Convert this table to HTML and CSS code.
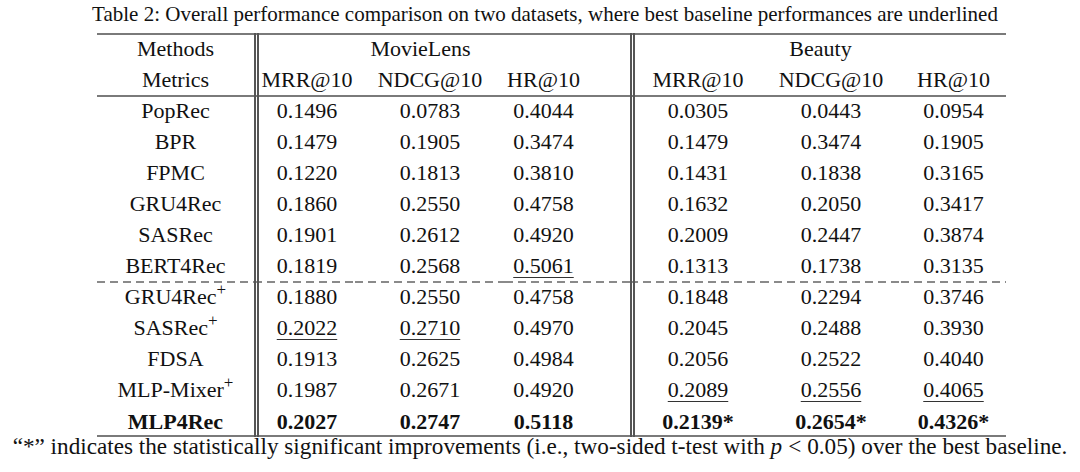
FILE: index.html
```html
<!DOCTYPE html>
<html lang="en">
<head>
<meta charset="utf-8">
<title>Table 2</title>
<link rel="stylesheet" href="styles.css">
</head>
<body>
<div class="page">
  <p class="caption">Table 2: Overall performance comparison on two datasets, where best baseline performances are underlined</p>
  <table class="results">
    <colgroup>
      <col class="c-method">
      <col class="c-ml1">
      <col class="c-ml2">
      <col class="c-ml3">
      <col class="c-b1">
      <col class="c-b2">
      <col class="c-b3">
    </colgroup>
    <thead>
      <tr class="top">
        <th>Methods</th>
        <th colspan="3" class="dl grp-ml">MovieLens</th>
        <th colspan="3" class="dl">Beauty</th>
      </tr>
      <tr>
        <th>Metrics</th>
        <th class="dl">MRR@10</th>
        <th>NDCG@10</th>
        <th class="pad">HR@10</th>
        <th class="dl">MRR@10</th>
        <th>NDCG@10</th>
        <th>HR@10</th>
      </tr>
    </thead>
    <tbody>
      <tr class="first">
        <td>PopRec</td><td class="dl">0.1496</td><td>0.0783</td><td class="pad">0.4044</td><td class="dl">0.0305</td><td>0.0443</td><td>0.0954</td>
      </tr>
      <tr>
        <td>BPR</td><td class="dl">0.1479</td><td>0.1905</td><td class="pad">0.3474</td><td class="dl">0.1479</td><td>0.3474</td><td>0.1905</td>
      </tr>
      <tr>
        <td>FPMC</td><td class="dl">0.1220</td><td>0.1813</td><td class="pad">0.3810</td><td class="dl">0.1431</td><td>0.1838</td><td>0.3165</td>
      </tr>
      <tr>
        <td>GRU4Rec</td><td class="dl">0.1860</td><td>0.2550</td><td class="pad">0.4758</td><td class="dl">0.1632</td><td>0.2050</td><td>0.3417</td>
      </tr>
      <tr>
        <td>SASRec</td><td class="dl">0.1901</td><td>0.2612</td><td class="pad">0.4920</td><td class="dl">0.2009</td><td>0.2447</td><td>0.3874</td>
      </tr>
      <tr>
        <td>BERT4Rec</td><td class="dl">0.1819</td><td>0.2568</td><td class="pad"><span class="ul">0.5061</span></td><td class="dl">0.1313</td><td>0.1738</td><td>0.3135</td>
      </tr>
      <tr class="dashed">
        <td>GRU4Rec<sup>+</sup></td><td class="dl">0.1880</td><td>0.2550</td><td class="pad">0.4758</td><td class="dl">0.1848</td><td>0.2294</td><td>0.3746</td>
      </tr>
      <tr>
        <td>SASRec<sup>+</sup></td><td class="dl"><span class="ul">0.2022</span></td><td><span class="ul">0.2710</span></td><td class="pad">0.4970</td><td class="dl">0.2045</td><td>0.2488</td><td>0.3930</td>
      </tr>
      <tr>
        <td>FDSA</td><td class="dl">0.1913</td><td>0.2625</td><td class="pad">0.4984</td><td class="dl">0.2056</td><td>0.2522</td><td>0.4040</td>
      </tr>
      <tr>
        <td>MLP-Mixer<sup>+</sup></td><td class="dl">0.1987</td><td>0.2671</td><td class="pad">0.4920</td><td class="dl"><span class="ul">0.2089</span></td><td><span class="ul">0.2556</span></td><td><span class="ul">0.4065</span></td>
      </tr>
      <tr class="last best">
        <td>MLP4Rec</td><td class="dl">0.2027</td><td>0.2747</td><td class="pad">0.5118</td><td class="dl">0.2139*</td><td>0.2654*</td><td>0.4326*</td>
      </tr>
    </tbody>
  </table>
  <p class="note">“*” indicates the statistically significant improvements (i.e., two-sided t-test with <i>p</i><span class="rel">&lt;</span>0.05) over the best baseline.</p>
</div>
</body>
</html>
```

FILE: styles.css
```css
* {
  box-sizing: border-box;
}

html, body {
  margin: 0;
  padding: 0;
  background: #ffffff;
}

body {
  font-family: "Liberation Serif", "Times New Roman", serif;
  color: #111111;
}

.page {
  width: 1080px;
  height: 472px;
  display: flex;
  flex-direction: column;
  align-items: center;
}

.caption {
  margin: 0 0 4px 10px;
  font-size: 21px;
  line-height: 29px;
  white-space: nowrap;
}

.results {
  margin-left: 23px;
  width: 909px;
  table-layout: fixed;
  border-collapse: separate;
  border-spacing: 0;
  font-size: 22px;
}

.c-method { width: 157px; }
.c-ml1 { width: 101px; }
.c-ml2 { width: 150px; }
.c-ml3 { width: 125px; }
.c-b1 { width: 131px; }
.c-b2 { width: 140px; }
.c-b3 { width: 105px; }

.results th,
.results td {
  height: 31px;
  padding: 0;
  line-height: 31px;
  text-align: center;
  vertical-align: middle;
  font-weight: normal;
  white-space: nowrap;
  background-repeat: no-repeat;
  background-origin: border-box;
}

.results .dl {
  border-left: 5px double #555555;
}

.results .pad,
.results .grp-ml {
  padding-right: 48px;
}

.results tr.top > th {
  background-image: linear-gradient(#7a7a7a, #7a7a7a);
  background-size: 100% 2px;
  background-position: left top;
}

.results tr.first > td {
  background-image: linear-gradient(#7a7a7a, #7a7a7a);
  background-size: 100% 2px;
  background-position: left top;
}

.results tr.dashed > td {
  background-image: repeating-linear-gradient(90deg, #8a8a8a 0 8px, transparent 8px 13px);
  background-size: 100% 2px;
  background-position: left top;
}

.results tr.last > td {
  height: 32px;
  background-image: linear-gradient(#7a7a7a, #7a7a7a);
  background-size: 100% 2px;
  background-position: left bottom;
}

.results tr.best > td {
  font-weight: bold;
}

.results sup {
  font-size: 17px;
  line-height: 0;
  vertical-align: 9px;
}

.ul {
  text-decoration: underline;
  text-decoration-thickness: 1px;
  text-underline-offset: 4px;
  text-decoration-color: #333333;
}

.note {
  margin: 0;
  font-size: 23.2px;
  line-height: 19px;
  white-space: nowrap;
}

.note i {
  font-style: italic;
}

.note .rel {
  margin: 0 6px;
}
```
